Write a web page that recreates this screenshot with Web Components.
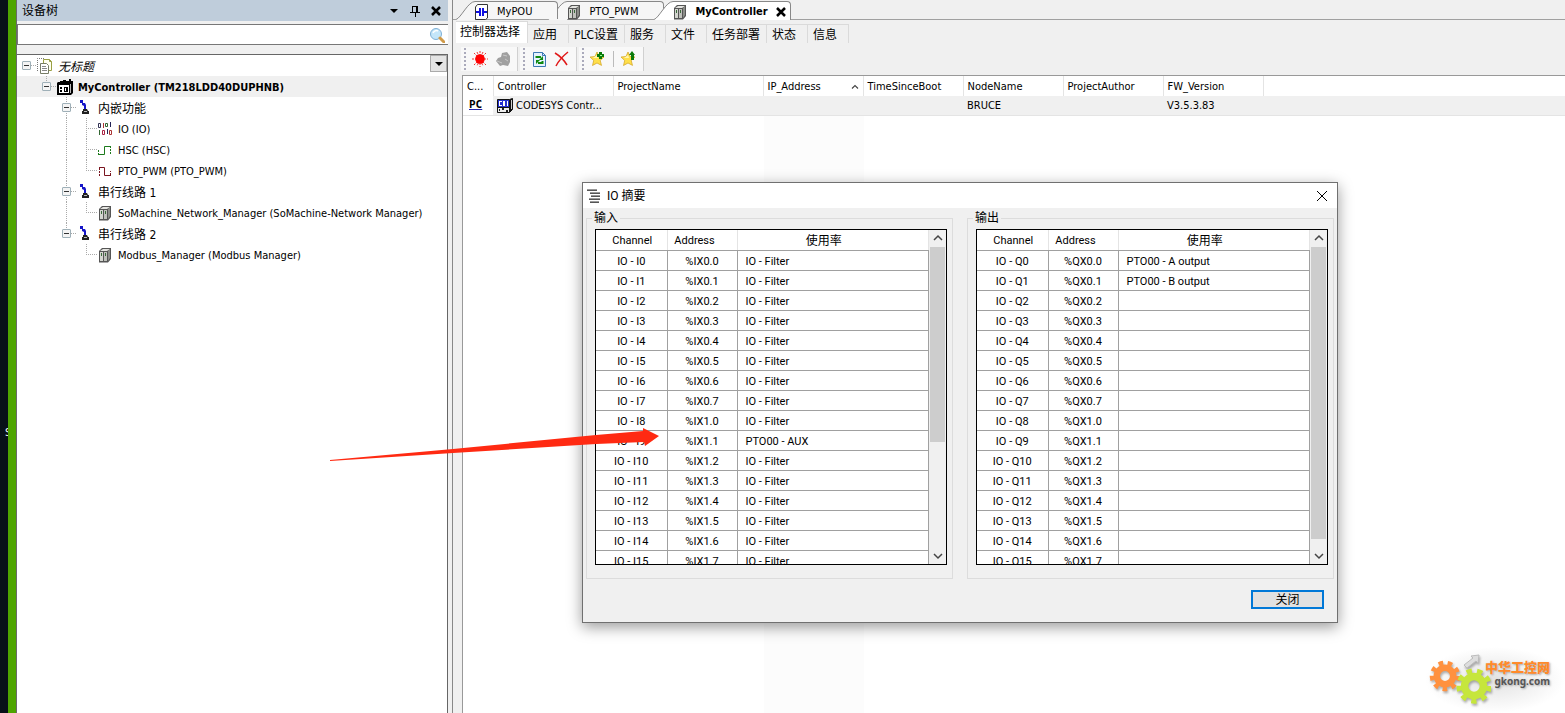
<!DOCTYPE html>
<html lang="zh-CN">
<head>
<meta charset="utf-8">
<title>MyController</title>
<style>
	html { height:100%; }
	body {
		margin:0;
		height:100vh;
		display:flex;
		overflow:hidden;
		background:#f0f0f0;
		color:#000;
		font:11px/16px "DejaVu Sans Condensed", "DejaVu Sans", "Noto Sans CJK SC", sans-serif;
	}
	tree-panel { flex:0 0 431px; }
	editor-panel { flex:1; min-width:0; margin-left:4px; }
	io-dialog { position:absolute; left:582px; top:182px; }
	pointer-arrow { position:absolute; left:330px; top:426px; }
	site-mark { position:absolute; right:0; bottom:0; }
</style>
</head>
<body>
	<desk-strip>S</desk-strip>
	<tree-panel heading="设备树">
		<tree-item guides="box" icon="docs" class="italic cjk">无标题</tree-item>
		<tree-item guides="none boxend" icon="plc" selected>MyController (TM218LDD40DUPHNB)</tree-item>
		<tree-item guides="none none boxtee" icon="plug" class="cjk">内嵌功能</tree-item>
		<tree-item guides="none none line tee" icon="bits">IO (IO)</tree-item>
		<tree-item guides="none none line tee" icon="hsc">HSC (HSC)</tree-item>
		<tree-item guides="none none line end" icon="pto">PTO_PWM (PTO_PWM)</tree-item>
		<tree-item guides="none none boxtee" icon="plug" class="cjk">串行线路 1</tree-item>
		<tree-item guides="none none line end" icon="server">SoMachine_Network_Manager (SoMachine-Network Manager)</tree-item>
		<tree-item guides="none none boxend" icon="plug" class="cjk">串行线路 2</tree-item>
		<tree-item guides="none none none end" icon="server">Modbus_Manager (Modbus Manager)</tree-item>
	</tree-panel>
	<editor-panel>
		<doc-tab slot="docs" icon="pou" class="first">MyPOU</doc-tab>
		<doc-tab slot="docs" icon="server">PTO_PWM</doc-tab>
		<doc-tab slot="docs" icon="server" active>MyController</doc-tab>
		<page-tabs slot="pages" items="控制器选择,应用,PLC设置,服务,文件,任务部署,状态,信息"></page-tabs>
		<tool-bar slot="tools"></tool-bar>
		<controller-list></controller-list>
	</editor-panel>
	<io-dialog heading="IO 摘要">
		<io-group heading="输入" letter="I" thumb="195"></io-group>
		<io-group heading="输出" letter="Q" thumb="292"></io-group>
	</io-dialog>
	<pointer-arrow></pointer-arrow>
	<site-mark></site-mark>

<script>
const star = '<path d="M7 1l2 4.500 5 .5-3.800 3.400 1.300 5L7 12l-4.500 2.500 1.200-5L0 6l5-.5z" fill="#ffdf4a" stroke="#d0a020" stroke-width=".7"/><path d="M7 4l1 3-5 0z" fill="#fff6b0"/>';

const icons = {
	docs:'<path d="M.5 13V.5h7" fill="none" stroke="#777" stroke-dasharray="1 1"/><path d="M6.500 1.500h6l2 2v9h-8z" fill="#fffff0" stroke="#9aa044"/><path d="M12.500 1.500v2h2" fill="none" stroke="#9aa044"/><path d="M3.500 5.500h6l2 2v8h-8z" fill="#fff" stroke="#777d66"/><path d="M5 8.500h4M5 10.500h5M5 12.500h5" stroke="#888"/>',
	plc:'<path d="M1 3h2V2h3V1h3v1h3V0h2v2h2v12l-2 2H0V4z" fill="#000"/><path d="M2 6h10v8H2z" fill="#fff"/><path d="M3 8h2v2H3zm0 3h2v2H3zm4-3h4v5H7z" fill="#000"/><path d="M8 9h1v3H8z" fill="#fff"/><path d="M13.500 5v9" stroke="#bbb"/>',
	plug:'<path d="M3 0h3v3h2l1 2v5H7V6L5 5V3H3z" fill="#1616c8"/><path d="M6 9h4l1 2h1v3H5v-3h1z" fill="#222"/><path d="M7 11.500h3" stroke="#bbb"/>',
	bits:'<g fill="none" stroke-width="1"><path d="M1.500 2.500h2v4h-2z" stroke="#335"/><path d="M6.500 2v5" stroke="#a33"/><path d="M8.500 2.500h2v3h-2z" stroke="#363"/><path d="M13.500 1v5" stroke="#225"/><path d="M2.500 9v5" stroke="#363"/><path d="M5.500 9.500h2v4h-2z" stroke="#a24"/><path d="M10.500 8v5" stroke="#225"/><path d="M12.500 9.500h2v4h-2z" stroke="#a33"/></g>',
	hsc:'<path d="M1 12.500h6.500v-8H13" fill="none" stroke="#1d7a1d"/><path d="M1.500 8v4M13.500 4v9" fill="none" stroke="#1d7a1d" stroke-dasharray="2 1"/>',
	pto:'<path d="M2 4.500h5.500v8H14" fill="none" stroke="#7a1520"/><path d="M2.500 13V4M13.500 12V8" fill="none" stroke="#7a1520" stroke-dasharray="2 1"/>',
	server:'<path d="M2 4l3-3h9v11l-3 3.500H2z" fill="#555"/><path d="M3 4l3-2h7l-3 2z" fill="#e4e4e0"/><path d="M3 5h3v9H3z" fill="#d4d6d0"/><path d="M7 5h3v9H7z" fill="#bfc1bb"/><path d="M11 4l2-2v9l-2 3z" fill="#8b8d88"/><path d="M4 6h1v3H4zM8 6h1v3H8z" fill="#3a6a3a"/>',
	pou:'<path d="M1.500 3l2-2.500h10V14l-2 1.500h-10z" fill="#fff" stroke="#333"/><path d="M2 7h3v2H2zM10 7h3v2h-3z" fill="#1010e0"/><path d="M5 4h2v8H5zM8 4h2v8H8z" fill="#1010e0"/>',
	sun:'<path d="M8 0v16M0 8h16M2 2l12 12M14 2L2 14M5 1l6 14M11 1L5 15" stroke="#e33" stroke-width="1" stroke-dasharray="2 1"/><circle cx="8" cy="8" r="4.800" fill="#f00"/>',
	hat:'<path d="M1 10l2-3 3-1 1-4 5-1 3 4v6l-2 4-5-1-3 1z" fill="#a0a0a0"/><path d="M2 10l5 2M8 4l4 1M10 8l3 2" stroke="#c8c8c8"/>',
	refresh:'<path d="M2.500 1.500h9l3 3v11h-12z" fill="#e4f2ff" stroke="#3c78b4"/><path d="M11.500 1.500v3h3" fill="none" stroke="#3c78b4"/><path d="M5.500 7V6H10M11.500 10v2H7" fill="none" stroke="#108a10" stroke-width="2"/><path d="M12 5v4H8zM5 13V9h4z" fill="#108a10"/>',
	remove:'<path d="M1 2c5 3 9 7 12 12M14 1C9 5 5 9 2 15" fill="none" stroke="#e01818" stroke-width="1.500"/>',
	staradd:star + '<path d="M9 1h3v2h2v3h-2v2H9V6H7V3h2z" fill="#0a7a0a"/><path d="M10 4.500h2" stroke="#9f9"/>',
	starup:star + '<path d="M11 0l3 4h-1v5h-3V4H8z" fill="#0a7a0a"/>',
	node:'<path d="M.5 1.500h12l3-1v11l-3 3H.5z" fill="#111" stroke="#111"/><path d="M1 2h11v7H1z" fill="#2430d0"/><path d="M2 3h3v1H3v3h2v1H2zM6 3h2v5H6zM10 3h1v5h-1z" fill="#fff"/><path d="M1 10h11v4H1z" fill="#eee"/><path d="M2 11h1v2H2zm3-1h2v2H5zm4 2h2v2H9z" fill="#222"/><path d="M14.500 2v9" stroke="#ccc"/>',
	lens:'<circle cx="7" cy="7" r="5.500" fill="#c4e6fa" stroke="#7fb0d6"/><path d="M4 6c1-2 3-3 5-2" fill="none" stroke="#fff" stroke-width="1.500"/><path d="M11 11l4 4" stroke="#d09a48" stroke-width="3" stroke-linecap="round"/>',
	down:'<path d="M4 6h8l-4 4z"/>',
	pin:'<path d="M5.500 3v6M10.500 3v6M5 3.500h6M3 9.500h10M8.500 10v4" fill="none" stroke="#000"/><path d="M9.500 3v6" stroke="#000"/>',
	cross:'<path d="M4 4l8 8M12 4l-8 8" stroke="#000" stroke-width="2.500"/>',
	thincross:'<path d="M3 3l10 10M13 3L3 13" stroke="#000"/>',
	list:'<path d="M1 1h10v2H1zM4 4h10v2H4zM5 7h9v2H5zM3 10h11v2H3zM4 13h9v2H4z" fill="#999"/><path d="M1 2.500h10M4 5.500h10M5 8.500h9M3 11.500h11M4 14.500h9" stroke="#555"/>',
	up:'<path d="M4 10l4-4 4 4" fill="none" stroke="#444" stroke-width="1.500"/>',
	dn:'<path d="M4 6l4 4 4-4" fill="none" stroke="#444" stroke-width="1.500"/>',
};
const icon = name => `<svg viewBox="0 0 16 16" width="16" height="16" aria-hidden="true">${icons[name]}</svg>`;

const base = `
	*, :host { box-sizing:border-box; }
	svg { display:block; flex:none; }
	button, input, select { font:inherit; color:inherit; margin:0; padding:0; border:0; background:none; }
	table { border-collapse:collapse; border-spacing:0; table-layout:fixed; }
	th { font-weight:normal; }
`;

/* shared base: subclasses only deliver their html */
class UiElement extends HTMLElement {
	constructor() {
		super();
		this.attachShadow({ mode:'open' });
	}
	connectedCallback() {
		this.shadowRoot.innerHTML = `<style>${base}</style>` + this.render();
	}
	attr(name) {
		return this.getAttribute(name) || '';
	}
}

/* desktop edge left of the window */
customElements.define('desk-strip', class extends UiElement {
	render() {
		return `
		<style>
			:host {
				flex:0 0 17px;
				display:flex;
				flex-direction:column;
				overflow:hidden;
				padding:425px 0 0 5px;
				color:#fff;
				background:linear-gradient(90deg, #081018 0 8px, #4ea500 8px 16px, #6a6a6a 16px);
			}
			span { width:3px; overflow:hidden; }
		</style>
		<span><slot></slot></span>`;
	}
});

/* device tree */
customElements.define('tree-panel', class extends UiElement {
	render() {
		return `
		<style>
			:host { display:flex; flex-direction:column; background:#f0f0f0; }
			header {
				display:flex;
				align-items:center;
				height:21px;
				padding:0 4px 0 5px;
				background:#bfcddb;
				font-size:12px;
			}
			h2 { flex:1; margin:0; font:inherit; }
			header button { width:16px; margin-left:5px; }
			.search {
				display:flex;
				align-items:center;
				height:21px;
				margin:3px 0 9px;
				padding-right:3px;
				background:#fff;
				border:solid #777;
				border-width:1px 0 1px 1px;
			}
			.search input { flex:1; outline:0; padding:0 4px; }
			.tree {
				flex:1;
				display:grid;
				align-content:start;
				background:#fff;
				border:solid #666;
				border-width:1px 1px 0 0;
			}
			.drop {
				grid-area:1 / 1;
				justify-self:end;
				width:17px;
				height:17px;
				background:#e4e4e4;
				border:1px solid #aaa;
				display:grid;
				place-items:center;
				overflow:hidden;
				z-index:1;
			}
			.rows { grid-area:1 / 1; }
		</style>
		<header>
			<h2>${this.attr('heading')}</h2>
			<button aria-label="菜单">${icon('down')}</button>
			<button aria-label="固定">${icon('pin')}</button>
			<button aria-label="关闭">${icon('cross')}</button>
		</header>
		<div class="search"><input type="text" aria-label="搜索">${icon('lens')}</div>
		<div class="tree">
			<button class="drop" aria-label="展开">${icon('down')}</button>
			<div class="rows"><slot></slot></div>
		</div>`;
	}
});

const guideLines = {
	none:'',
	line:'M9.500 0v21',
	tee:'M9.500 0v21M9 10.500h11',
	end:'M9.500 0v11M9 10.500h11',
	box:'M14 10.500h6',
	boxtee:'M9.500 0v21M14 10.500h6',
	boxend:'M9.500 0v6M14 10.500h6',
};

customElements.define('tree-item', class extends UiElement {
	render() {
		const cells = this.attr('guides').split(' ').map(g => `
			<span class="cell">
				<svg width="20" height="21"><path d="${guideLines[g]}" stroke="#aaa" stroke-dasharray="1 1"/></svg>
				${g.startsWith('box') ? '<button aria-label="折叠"></button>' : ''}
			</span>`).join('');
		return `
		<style>
			:host { display:flex; align-items:center; height:21px; white-space:nowrap; }
			:host([selected]) { background:#f0f0f0; font-weight:bold; }
			:host(.cjk) { font-size:12px; }
			:host(.italic) { font-style:italic; }
			:host > svg { margin-top:1px; }
			.cell { display:grid; }
			.cell > * { grid-area:1 / 1; }
			button {
				place-self:center start;
				width:9px;
				height:9px;
				margin-left:5px;
				border:1px solid #9fb0b8;
				border-radius:1px;
				background:linear-gradient(#333, #333) center / 5px 1px no-repeat #f4f4f4;
			}
			.text { margin-left:5px; padding-top:2px; }
		</style>
		${cells}${icon(this.attr('icon'))}<span class="text"><slot></slot></span>`;
	}
});

/* editor area */
customElements.define('editor-panel', class extends UiElement {
	render() {
		return `
		<style>
			:host { display:flex; flex-direction:column; border-left:1px solid #888; }
			.docs { display:flex; align-items:flex-end; height:20px; padding-left:3px; border-bottom:1px solid #a0a0a0; }
			.list { flex:1; display:flex; margin-left:9px; }
			::slotted(controller-list) { flex:1; }
		</style>
		<div class="docs"><slot name="docs"></slot></div>
		<slot name="pages"></slot>
		<slot name="tools"></slot>
		<div class="list"><slot></slot></div>`;
	}
});

customElements.define('doc-tab', class extends UiElement {
	render() {
		const active = this.hasAttribute('active');
		return `
		<style>
			:host { display:flex; height:18px; margin-left:-10px; position:relative; }
			:host(.first) { margin-left:0; z-index:1; }
			:host([active]) { z-index:2; font-weight:bold; height:19px; margin-bottom:-1px; }
			.body {
				display:flex;
				align-items:center;
				padding-right:25px;
				background:#f6f6f6;
				border:solid #888;
				border-width:1px 1px 0 0;
				border-radius:0 4px 0 0;
			}
			.slant { fill:#f6f6f6; stroke:#888; }
			:host([active]) .slant { fill:#fff; }
			:host([active]) .body { background:#fff; padding-right:1px; }
			.label { display:flex; gap:7px; align-items:center; border:0; background:none; font:inherit; padding:2px 0 0; margin-left:-1px; }
			.x { margin-left:5px; padding-top:2px; }
		</style>
		<svg class="slant" width="19" height="19"><path d="M0 18C5 17 12 .5 19 .5V20H0" stroke="none"/><path d="M0 18.500C5 17 12 .5 19 .5" fill="none"/></svg>
		<div class="body">
			<button class="label">${icon(this.attr('icon'))}<span><slot></slot></span></button>
			${active ? `<button class="x" aria-label="关闭">${icon('cross')}</button>` : ''}
		</div>`;
	}
});

customElements.define('page-tabs', class extends UiElement {
	render() {
		const tabs = this.attr('items').split(',').map((t, i) => `<button role="tab" aria-selected="${i === 0}">${t}</button>`).join('');
		return `
		<style>
			:host { display:flex; align-items:flex-end; height:23px; padding-left:3px; font-size:12px; }
			button {
				height:19px;
				min-width:41px;
				padding:1px 6px 0 5px;
				text-align:left;
				border:solid #dadada;
				border-width:1px 1px 0 0;
				white-space:nowrap;
			}
			[aria-selected=true] { height:22px; padding:0 7px 1px 4px; background:#fff; }
		</style>${tabs}`;
	}
});

customElements.define('tool-bar', class extends UiElement {
	render() {
		const btn = (name, label) => `<button aria-label="${label}">${icon(name)}</button>`;
		return `
		<style>
			:host { display:flex; gap:2px; height:24px; margin:4px 0 4px 8px; }
			.group {
				display:flex;
				align-items:center;
				gap:7px;
				padding:0 6px 0 11px;
				border-right:1px solid #d0d0d0;
				background:radial-gradient(circle, #aab 1px, transparent 1px) 2px 4px / 4px 4px repeat-y, #f8f8f8;
			}
			i { width:1px; height:16px; background:#bbb; }
		</style>
		<div class="group">${btn('sun', '登录')}${btn('hat', '退出')}</div>
		<div class="group">${btn('refresh', '刷新')}${btn('remove', '删除')}</div>
		<div class="group">${btn('staradd', '添加收藏')}<i></i>${btn('starup', '收藏')}</div>`;
	}
});

customElements.define('controller-list', class extends UiElement {
	render() {
		const heads = ['C...', 'Controller', 'ProjectName', 'IP_Address', 'TimeSinceBoot', 'NodeName', 'ProjectAuthor', 'FW_Version', ''];
		const widths = [30, 120, 150, 100, 100, 100, 100, 100];
		const row = ['<b>PC</b>', `<span>${icon('node')}CODESYS Contr...</span>`, '', '', '', 'BRUCE', '', 'V3.5.3.83', ''];
		return `
		<style>
			:host {
				display:block;
				border:solid #999;
				border-width:1px 0 0 1px;
				background:linear-gradient(#fcfcfc, #fcfcfc) 301px 0 / 100px 100% no-repeat #fff;
			}
			table { width:100%; }
			th, td { padding:2px 0 0 4px; text-align:left; white-space:nowrap; }
			th { height:20px; background:#fff; border-right:1px solid #e4e4e4; }
			th:last-child { border:0; }
			td { height:19px; background:#f0f0f0; border-bottom:1px solid #e4e4e4; }
			span { display:flex; align-items:center; gap:3px; }
			td:first-child { background:#fff; padding:0 0 0 6px; }
			b { font:bold 11px/12px "DejaVu Sans Mono", monospace; text-decoration:underline; text-decoration-color:#22a; }
			.sort { justify-content:space-between; }
			.sort svg { width:12px; margin-right:2px; }
		</style>
		<table>
			<colgroup>${widths.map(w => `<col style="width:${w}px">`).join('')}<col></colgroup>
			<thead><tr>${heads.map(h => `<th>${h === 'IP_Address' ? `<span class="sort">${h}${icon('up')}</span>` : h}</th>`).join('')}</tr></thead>
			<tbody><tr>${row.map(c => `<td>${c}</td>`).join('')}</tr></tbody>
		</table>`;
	}
});

/* io summary window */
customElements.define('io-dialog', class extends UiElement {
	render() {
		return `
		<style>
			:host {
				display:block;
				width:756px;
				background:#f0f0f0;
				border:1px solid #707070;
				box-shadow:0 4px 14px rgba(0,0,0,.4);
				font-family:Roboto, "Noto Sans CJK SC", sans-serif;
			}
			header { display:flex; align-items:center; gap:5px; height:25px; padding:0 7px 0 3px; background:#fff; font-size:12px; }
			h2 { flex:1; margin:0; font:inherit; }
			.groups { display:grid; grid-template-columns:1fr 1fr; gap:14px; padding:2px 3px 0; }
			footer { display:flex; justify-content:flex-end; padding:11px 13px 13px; }
			footer button { width:73px; height:19px; border:2px solid #0078d7; background:#e1e1e1; font-size:12px; line-height:14px; }
		</style>
		<header>${icon('list')}<h2>${this.attr('heading')}</h2><button aria-label="关闭窗口">${icon('thincross')}</button></header>
		<div class="groups"><slot></slot></div>
		<footer><button>关闭</button></footer>`;
	}
});

customElements.define('io-group', class extends UiElement {
	usage(i) {
		if (this.attr('letter') === 'I') return i === 9 ? 'PTO00 - AUX' : 'IO - Filter';
		return ['PTO00 - A output', 'PTO00 - B output'][i] || '';
	}
	render() {
		const l = this.attr('letter');
		let rows = '';
		for (let i = 0; i < 16; i++) {
			rows += `<tr><td>IO - ${l}${i}</td><td>%${l}X${i >> 3}.${i & 7}</td><td>${this.usage(i)}</td></tr>`;
		}
		return `
		<style>
			:host { display:block; min-width:0; }
			fieldset { margin:0; min-width:0; padding:3px 5px 13px 8px; border:1px solid #dcdcdc; }
			legend { margin-left:-3px; padding:0 2px; font-size:12px; line-height:16px; }
			.frame { display:flex; height:336px; overflow:hidden; border:1px solid #000; }
			table { flex:1; align-self:flex-start; background:#fff; }
			th, td { height:20px; padding:3px 0 0; line-height:14px; text-align:center; white-space:nowrap; border:solid #a0a0a0; border-width:0 1px 1px 0; }
			th { border-right-color:#e4e4e4; }
			th:nth-child(1) { padding-left:2px; }
			th:nth-child(2) { padding-right:15px; }
			th:nth-child(3) { padding-right:18px; font-size:12px; }
			td:nth-child(3) { text-align:left; padding-left:8px; }
			.bar { flex:0 0 17px; display:flex; flex-direction:column; align-items:center; background:#f0f0f0; }
			.thumb { width:15px; height:${this.attr('thumb')}px; margin:1px 0 auto; background:#cdcdcd; }
		</style>
		<fieldset>
			<legend>${this.attr('heading')}</legend>
			<div class="frame">
				<table>
					<colgroup><col style="width:71px"><col style="width:70px"><col></colgroup>
					<thead><tr><th>Channel</th><th>Address</th><th>使用率</th></tr></thead>
					<tbody>${rows}</tbody>
				</table>
				<div class="bar">
					<button aria-label="向上">${icon('up')}</button>
					<div class="thumb"></div>
					<button aria-label="向下">${icon('dn')}</button>
				</div>
			</div>
		</fieldset>`;
	}
});

customElements.define('pointer-arrow', class extends UiElement {
	render() {
		return `
		<style>:host { display:block; pointer-events:none; }</style>
		<svg width="330" height="36"><path d="M0 34L123 23 266 9 313 5V2L329 10 315 20 314 16 266 18 123 27 0 35z" fill="#ff2a12"/></svg>`;
	}
});

customElements.define('site-mark', class extends UiElement {
	render() {
		const gear = (x, y, r, color) => {
			const tooth = 2 * Math.PI * r / 18;
			return `<g fill="none" stroke="${color}" transform="translate(${x} ${y})"><circle r="${r * 0.63}" stroke-width="${r * 0.5}"/><circle r="${r}" stroke-width="${r * 0.35}" stroke-dasharray="${tooth}"/></g>`;
		};
		return `
		<style>
			:host {
				display:flex;
				width:140px;
				height:66px;
				background:radial-gradient(closest-side, #e2e2e2, rgba(255,255,255,0));
			}
			svg { filter:drop-shadow(1px 2px 1px rgba(0,0,0,.3)); }
			.name { display:flex; flex-direction:column; margin-left:-6px; padding-top:13px; font:bold 10px/13px "Noto Sans", "Noto Sans CJK SC", sans-serif; text-shadow:1px 1px 2px #aaa; }
			b { color:#ff8a2b; font-size:13px; line-height:15px; }
			span { color:#555; align-self:flex-end; }
		</style>
		<svg width="66" height="66">
			${gear(20, 29, 13, '#ff913f')}${gear(49, 39, 15, '#c6e63c')}
			<path d="M39 18l9-7-2-2 8-1-1 8-2-2-9 7z" fill="#ddd" stroke="#bbb"/>
		</svg>
		<div class="name"><b>中华工控网</b><span>gkong.com</span></div>`;
	}
});
</script>
</body>
</html>
